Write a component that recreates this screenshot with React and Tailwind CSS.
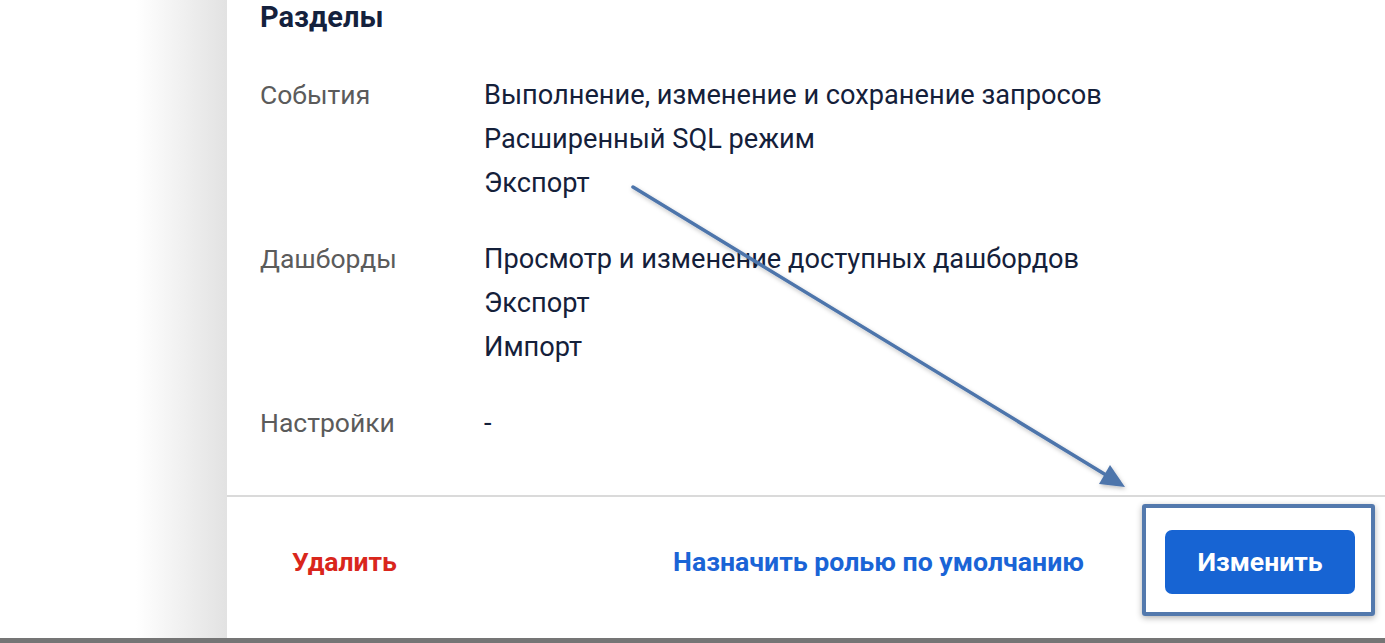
import React from "react";

const sections = [
  {
    label: "События",
    items: [
      "Выполнение, изменение и сохранение запросов",
      "Расширенный SQL режим",
      "Экспорт",
    ],
  },
  {
    label: "Дашборды",
    items: ["Просмотр и изменение доступных дашбордов", "Экспорт", "Импорт"],
  },
  { label: "Настройки", items: ["-"] },
];

// annotation arrow drawn over the screenshot
const Arrow = () => (
  <svg
    className="absolute left-0 top-0 pointer-events-none"
    width="1385"
    height="643"
    viewBox="0 0 1385 643"
  >
    <defs>
      <filter id="sh" x="-10%" y="-10%" width="120%" height="120%">
        <feDropShadow dx="1" dy="2" stdDeviation="2" floodColor="#000" floodOpacity="0.25" />
      </filter>
    </defs>
    <g filter="url(#sh)">
      <line x1="633" y1="187" x2="1106" y2="475" stroke="#4e75ab" strokeWidth="3.5" strokeLinecap="round" />
      <polygon points="1125,487 1099,484 1110,465" fill="#4e75ab" />
    </g>
  </svg>
);

export default function App() {
  return (
    <div
      className="relative w-[1385px] h-[643px] flex flex-col bg-white overflow-hidden"
      style={{ fontFamily: "Roboto, 'Noto Sans', sans-serif" }}
    >
      <div className="flex flex-1 min-h-0">
        {/* shadow cast by the drawer */}
        <div className="w-[227px] shrink-0 bg-gradient-to-r from-white from-60% to-[#e2e2e2]" />

        <div className="flex-1 flex flex-col">
          <div className="flex-1 pl-[33px]">
            <h2 className="text-[29px] leading-[34px] font-bold text-[#14213d]">Разделы</h2>

            <div className="mt-[39px] flex flex-col gap-[32px]">
              {sections.map((s) => (
                <div key={s.label} className="flex leading-[44px]">
                  <div className="w-[224px] shrink-0 text-[26.5px] text-[#5b5b5b]">{s.label}</div>
                  <div className="flex flex-col text-[27.2px] text-[#14203a]">
                    {s.items.map((it, i) => (
                      <span key={i}>{it}</span>
                    ))}
                  </div>
                </div>
              ))}
            </div>
          </div>

          <div className="h-[2px] bg-[#dadada]" />

          {/* footer actions */}
          <div className="h-[141px] pt-[33px] pl-[65px] pr-[30px] flex items-start">
            <div className="h-[64px] flex items-center text-[26.5px] font-bold text-[#d9261c]">
              Удалить
            </div>
            <div className="flex-1" />
            <div className="h-[64px] flex items-center text-[26.7px] font-bold text-[#1a64d6]">
              Назначить ролью по умолчанию
            </div>
            <button className="ml-[81px] w-[190px] h-[64px] rounded-[7px] bg-[#1764d3] text-white text-[26.5px] font-bold">
              Изменить
            </button>
          </div>
        </div>
      </div>

      <div className="h-[5px] bg-[#757575]" />

      {/* highlight frame around the primary button */}
      <div className="absolute left-[1142px] top-[504px] w-[233px] h-[112px] border-4 border-[#5379ad] rounded-[3px] shadow-[0_2px_6px_rgba(0,0,0,0.3)]" />

      <Arrow />
    </div>
  );
}
